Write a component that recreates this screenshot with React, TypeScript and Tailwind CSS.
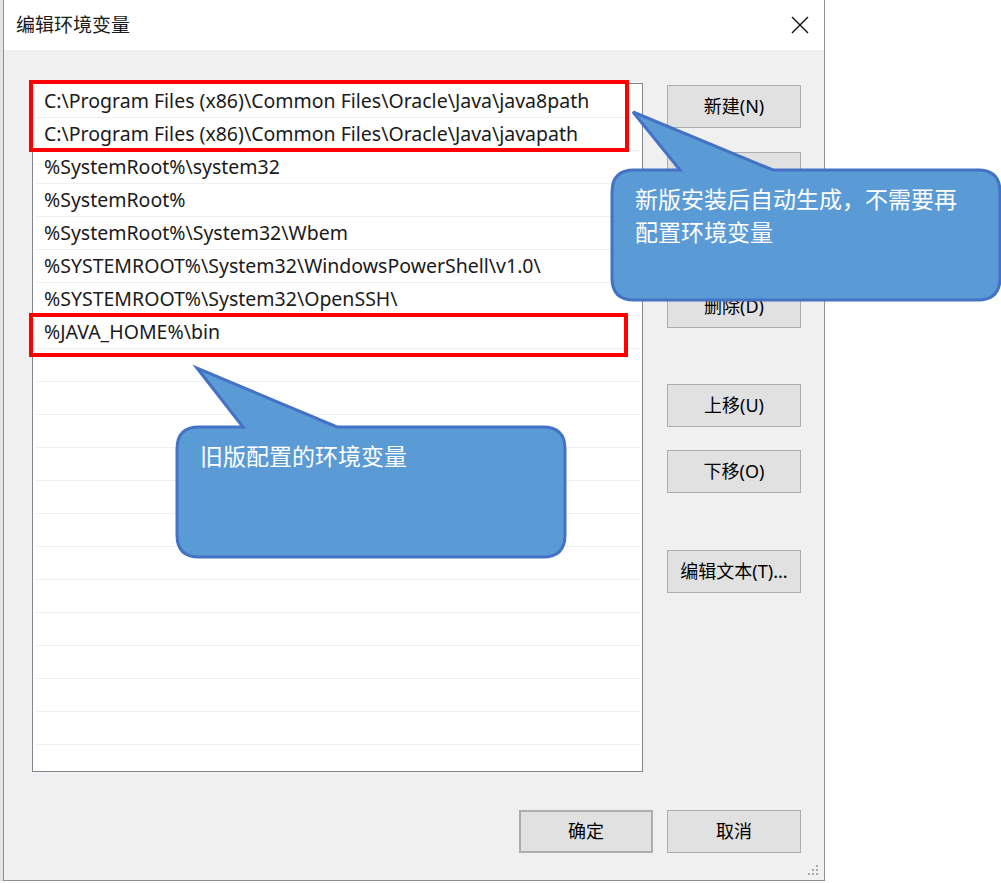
const paths = [
  "C:\\Program Files (x86)\\Common Files\\Oracle\\Java\\java8path",
  "C:\\Program Files (x86)\\Common Files\\Oracle\\Java\\javapath",
  "%SystemRoot%\\system32",
  "%SystemRoot%",
  "%SystemRoot%\\System32\\Wbem",
  "%SYSTEMROOT%\\System32\\WindowsPowerShell\\v1.0\\",
  "%SYSTEMROOT%\\System32\\OpenSSH\\",
  "%JAVA_HOME%\\bin",
];

const rows = [...paths, ...Array(13).fill("")];

function WinButton({ label, className = "" }: { label: string; className?: string }) {
  return (
    <button
      className={`flex h-[43px] w-[134px] items-center justify-center border border-[#adadad] bg-[#e1e1e1] text-[18px] text-black ${className}`}
    >
      {label}
    </button>
  );
}

export default function App() {
  return (
    <div
      className="relative flex h-[883px] w-[1001px] overflow-hidden bg-white"
      style={{ fontFamily: '"Noto Sans", "Noto Sans CJK SC", sans-serif' }}
    >
      {/* strip of the window behind */}
      <div className="h-[881px] w-[3px] bg-[#e4e4e4]" />

      {/* dialog */}
      <div className="relative flex h-[881px] w-[822px] flex-col border-x border-b border-[#8f8f8f]">
        <div className="flex h-[50px] items-center justify-between bg-white pl-[12px] pr-[15px]">
          <span className="text-[19px] text-[#1a1a1a]">编辑环境变量</span>
          <svg width="18" height="18" viewBox="0 0 18 18">
            <path d="M1 1 L17 17 M17 1 L1 17" stroke="#111" strokeWidth="1.4" />
          </svg>
        </div>

        <div className="flex flex-1 flex-col bg-[#f0f0f0] pl-[28px] pr-[23px] pt-[33px]">
          <div className="flex gap-[24px]">
            <div className="h-[689px] w-[611px] overflow-hidden border border-[#828790] bg-white px-[2px] pt-[1px]">
              {rows.map((p, i) => (
                <div
                  key={i}
                  className="flex h-[33px] items-center whitespace-nowrap border-b border-[#f0f0f0] pl-[9px] text-[19.5px] leading-none text-[#1a1a1a]"
                >
                  {p}
                </div>
              ))}
            </div>

            {/* the two buttons under the callout keep their frame only */}
            <div className="mt-[2px] flex flex-col">
              <WinButton label="新建(N)" />
              <WinButton label="" className="mt-[24px]" />
              <WinButton label="" className="mt-[23px]" />
              <WinButton label="删除(D)" className="mt-[24px]" />
              <WinButton label="上移(U)" className="mt-[56px]" />
              <WinButton label="下移(O)" className="mt-[23px]" />
              <WinButton label="编辑文本(T)..." className="mt-[57px]" />
            </div>
          </div>

          <div className="mt-[38px] flex justify-end gap-[14px]">
            <WinButton label="确定" className="border-2 border-[#0078d7]" />
            <WinButton label="取消" />
          </div>
        </div>

        {/* resize grip */}
        <svg width="12" height="12" viewBox="0 0 12 12" className="absolute bottom-[4px] right-[5px]">
          <g fill="#a8a8a8">
            <rect x="9" y="1" width="2" height="2" />
            <rect x="5" y="5" width="2" height="2" />
            <rect x="9" y="5" width="2" height="2" />
            <rect x="1" y="9" width="2" height="2" />
            <rect x="5" y="9" width="2" height="2" />
            <rect x="9" y="9" width="2" height="2" />
          </g>
        </svg>
      </div>

      {/* annotation: red boxes */}
      <div className="absolute left-[29px] top-[80px] h-[72px] w-[600px] border-4 border-[#ff0000]" />
      <div className="absolute left-[29px] top-[313px] h-[44px] w-[599px] border-4 border-[#ff0000]" />

      {/* annotation: callouts */}
      <svg width="1001" height="883" className="pointer-events-none absolute left-0 top-0">
        <path
          d="M634 170 L680 170 L633 112 L773 170 L978 170 Q1000 170 1000 192 L1000 278 Q1000 300 978 300 L634 300 Q612 300 612 278 L612 192 Q612 170 634 170 Z"
          fill="#5b9bd5"
          stroke="#4472c4"
          strokeWidth="3"
        />
        <path
          d="M199 427 L243 427 L197 368 L337 427 L543 427 Q565 427 565 449 L565 535 Q565 557 543 557 L199 557 Q177 557 177 535 L177 449 Q177 427 199 427 Z"
          fill="#5b9bd5"
          stroke="#4472c4"
          strokeWidth="3"
        />
      </svg>
      <div className="absolute left-[635px] top-[183px] w-[350px] text-[23px] leading-[33px] text-white">
        新版安装后自动生成，不需要再
        <br />
        配置环境变量
      </div>
      <div className="absolute left-[200px] top-[440px] text-[23px] leading-[33px] text-white">
        旧版配置的环境变量
      </div>
    </div>
  );
}
